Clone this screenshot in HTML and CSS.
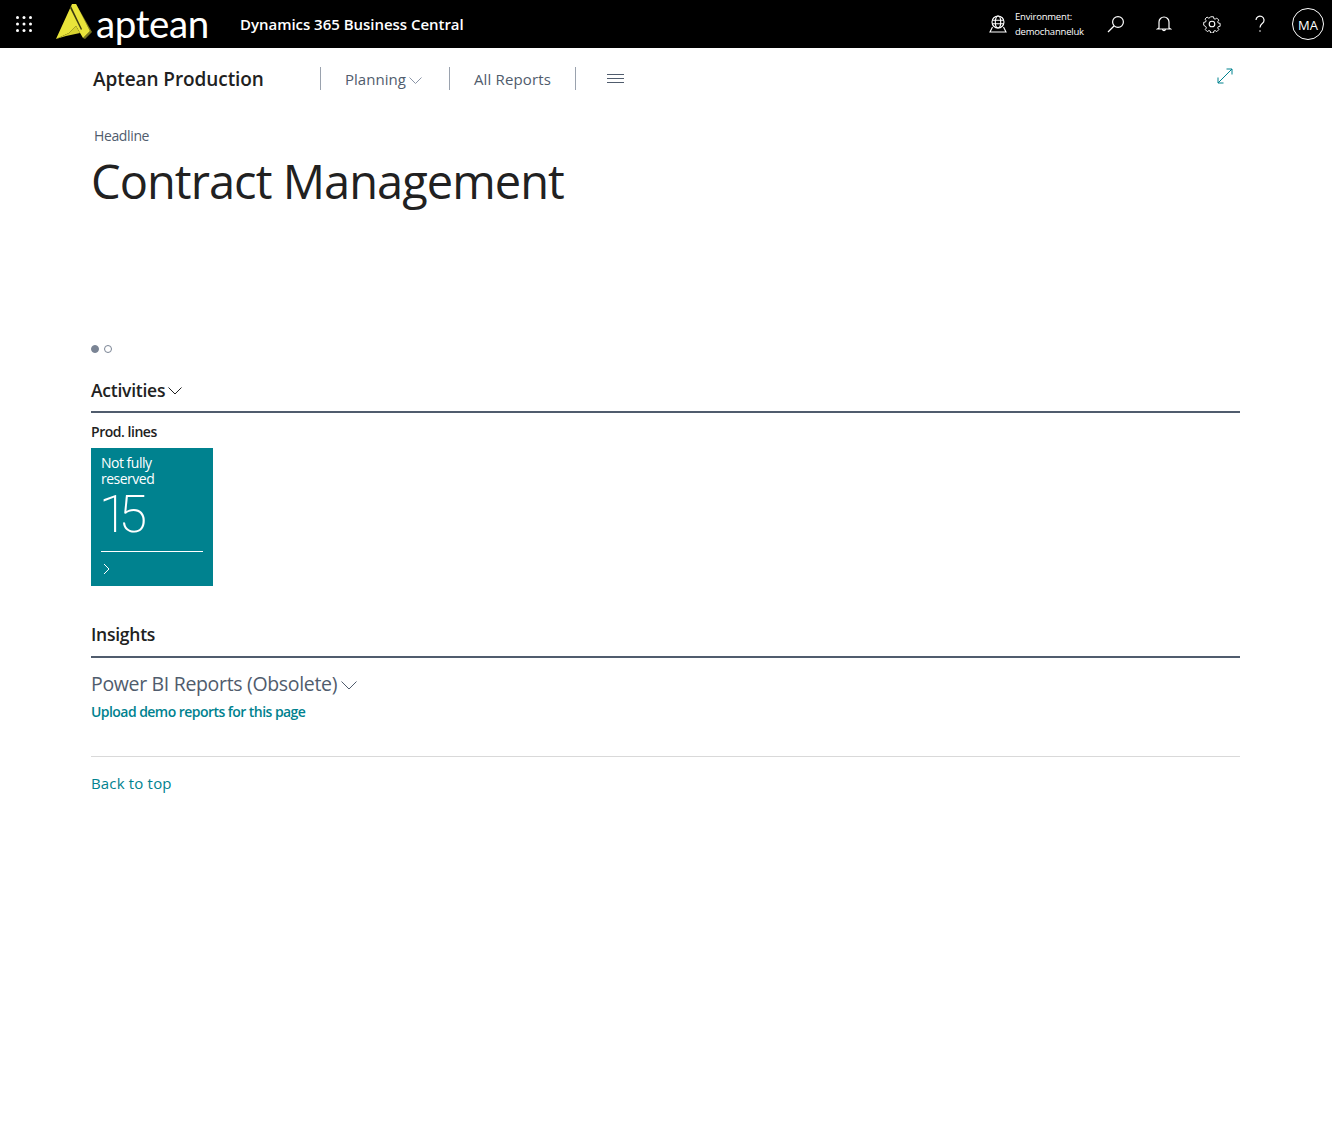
FILE: index.html
```html
<!DOCTYPE html>
<html lang="en">
<head>
<meta charset="utf-8">
<title>Dynamics 365 Business Central</title>
<link rel="stylesheet" href="styles.css">
</head>
<body>
<header class="topbar">
  <svg class="waffle" width="16" height="16" viewBox="0 0 16 16" fill="#fff"><circle cx="1.5" cy="1.5" r="1.5"/><circle cx="8" cy="1.5" r="1.5"/><circle cx="14.5" cy="1.5" r="1.5"/><circle cx="1.5" cy="8" r="1.5"/><circle cx="8" cy="8" r="1.5"/><circle cx="14.5" cy="8" r="1.5"/><circle cx="1.5" cy="14.5" r="1.5"/><circle cx="8" cy="14.5" r="1.5"/><circle cx="14.5" cy="14.5" r="1.5"/></svg>
  <svg class="logomark" width="37" height="37" viewBox="0 0 37 37"><path d="M20 1 L36 29 L29 36 L27 35 L34 28 L19 2 Z" fill="#77751f"/><path d="M0 36 L16 1 L20 1 L34 28 L27 35 L20 23 L13 30 Z" fill="#e9e43a"/><path d="M0 36 L13 30 L20 23 L24 30 L10 33 Z" fill="#d8d32f"/><path d="M15 3 L26 26 L25 27 L14 5 Z" fill="#3a3a10"/></svg>
  <span class="wordmark">aptean</span>
  <span class="product">Dynamics 365 Business Central</span>
  <div class="env">
    <svg width="18" height="18" viewBox="0 0 18 18" fill="none" stroke="#fff" stroke-width="1.1"><circle cx="9" cy="7" r="6"/><ellipse cx="9" cy="7" rx="2.700" ry="6"/><path d="M3.200 5.200h11.600M3.200 8.800h11.600M3.500 12 1 17h16l-2.500-5"/></svg>
    <div class="env-text"><span>Environment:</span><span>demochanneluk</span></div>
  </div>
  <button class="tool"><svg width="18" height="18" viewBox="0 0 18 18" fill="none" stroke="#fff" stroke-width="1.2"><circle cx="11" cy="7" r="5.400"/><path d="M7 11 1 17"/></svg></button>
  <button class="tool"><svg width="16" height="18" viewBox="0 0 16 18" fill="none" stroke="#fff" stroke-width="1.2"><path d="M3 13V7a5 5 0 0 1 10 0v6l1.500 1h-13ZM6.500 14.500a1.600 1.600 0 0 0 3 0"/></svg></button>
  <button class="tool"><svg width="18" height="18" viewBox="0 0 18 18" fill="none" stroke="#fff" stroke-width="1.1"><circle cx="9" cy="9" r="2.800"/><path d="M7.300 1h3.400l.4 2.200 1.500.6 1.900-1.300 2.400 2.400-1.300 1.900.6 1.500 2.200.4v3.400l-2.200.4-.6 1.500 1.300 1.900-2.400 2.400-1.900-1.300-1.500.6-.4 2.200H7.300l-.4-2.200-1.500-.6-1.900 1.300-2.400-2.400 1.300-1.900-.6-1.500L-.7 10.900V7.500l2.200-.4.6-1.500L.8 3.700l2.400-2.400 1.900 1.300 1.500-.6Z" transform="translate(1.300 .9) scale(.86)"/></svg></button>
  <button class="tool"><svg width="12" height="18" viewBox="0 0 12 18" fill="none" stroke="#fff" stroke-width="1.2"><path d="M2 5a4 4 0 1 1 6.500 3.200C7 9.400 6 10 6 12.500"/><circle cx="6" cy="16" r=".8" fill="#fff" stroke="none"/></svg></button>
  <div class="avatar">MA</div>
</header>

<main class="page">
  <nav class="pagenav">
    <h1 class="company">Aptean Production</h1>
    <div class="navitems">
      <a class="navitem first">Planning<svg class="chev-sm" width="13" height="7" viewBox="0 0 13 7" fill="none" stroke="#8a94a6"><path d="M.5.500 6.500 6.500 12.500.5"/></svg></a>
      <a class="navitem">All Reports</a>
      <span class="navmenu"><svg width="17" height="9" viewBox="0 0 17 9" stroke="#505c6d"><path d="M0 .5h17M0 4.500h17M0 8.500h17"/></svg></span>
    </div>
    <svg class="expand" width="16" height="16" viewBox="0 0 16 16" fill="none" stroke="#00828f" stroke-width="1"><path d="M1 15 15 1M9.500 1H15v5.500M1 9.500V15h5.500"/></svg>
  </nav>

  <section class="headline">
    <div class="headline-label">Headline</div>
    <div class="headline-text">Contract Management</div>
    <div class="dots"><span class="dot on"></span><span class="dot"></span></div>
  </section>

  <section class="activities">
    <h2 class="section-title">Activities<svg width="14" height="8" viewBox="0 0 14 8" fill="none" stroke="#212121"><path d="M.5.500 7 7l6.500-6.500"/></svg></h2>
    <h3 class="group-title">Prod. lines</h3>
    <a class="cue">
      <span class="cue-label">Not fully reserved</span>
      <span class="cue-value">15</span>
      <span class="cue-foot"><svg width="7" height="12" viewBox="0 0 7 12" fill="none" stroke="#fff"><path d="M1 1l5 5-5 5"/></svg></span>
    </a>
  </section>

  <section class="insights">
    <h2 class="section-title tall">Insights</h2>
    <h3 class="pbi-title">Power BI Reports (Obsolete)<svg width="16" height="9" viewBox="0 0 16 9" fill="none" stroke="#505c6d"><path d="M.5.500 8 8l7.500-7.500"/></svg></h3>
    <a class="upload">Upload demo reports for this page</a>
  </section>

  <footer class="pagefoot"><a class="backtop">Back to top</a></footer>
</main>
</body>
</html>
```
FILE: styles.css
```css
* { box-sizing: border-box; }
html, body { margin: 0; padding: 0; }
body { font-family: "Open Sans", "Noto Sans", sans-serif; background: #fff; color: #212121; height: 1128px; overflow: hidden; }
h1, h2, h3 { margin: 0; }
button { background: none; border: 0; padding: 0; }

.topbar { height: 48px; background: #000; color: #fff; display: flex; align-items: center; }
.waffle { margin-left: 16px; flex: none; }
.logomark { margin-left: 24px; flex: none; margin-top: -6px; }
.wordmark { font-family: "Lato", sans-serif; font-size: 38.500px; line-height: 48px; margin-left: 3px; letter-spacing: -.4px; width: 112px; margin-top: -3px; }
.product { font-size: 15px; font-weight: 600; margin-left: 32px; letter-spacing: -.03px; white-space: nowrap; }
.env { margin-left: auto; display: flex; align-items: center; gap: 8px; }
.env-text { display: flex; flex-direction: column; font-size: 9.500px; line-height: 15px; letter-spacing: -.2px; width: 77px; white-space: nowrap; }
.tool { width: 48px; height: 48px; display: flex; align-items: center; justify-content: center; flex: none; }
.avatar { width: 32px; height: 32px; margin: 0 8px; border: 1px solid #fff; border-radius: 50%; display: flex; align-items: center; justify-content: center; font-size: 13px; padding-top: 1px; flex: none; }

.page { padding: 0 92px 0 91px; }
.pagenav { height: 62px; display: flex; align-items: center; position: relative; }
.company { font-size: 19px; line-height: 24px; font-weight: 600; margin-left: 2px; width: 227px; letter-spacing: -.08px; white-space: nowrap; }
.navitems { display: flex; align-items: center; margin-top: -1px; }
.navitem { height: 23px; border-left: 1px solid #9aa2ae; display: flex; align-items: center; gap: 3px; padding: 0 24px; font-size: 15px; color: #505c6d; letter-spacing: .15px; white-space: nowrap; }
.navitem.first { padding-right: 27px; letter-spacing: .03px; }
.navmenu { height: 23px; border-left: 1px solid #9aa2ae; padding: 0 0 0 31px; display: flex; align-items: center; }
.chev-sm { margin-top: 3px; }
.expand { position: absolute; right: 7px; top: 20px; }

.headline { height: 268px; padding-top: 16px; }
.headline-label { font-size: 14px; line-height: 20px; color: #505c6d; margin-left: 3px; letter-spacing: -.37px; }
.headline-text { font-size: 47px; line-height: 60px; letter-spacing: -.95px; margin-top: 5px; font-weight: 400; color: #212121; white-space: nowrap; }
.dots { display: flex; gap: 5px; margin-top: 134px; }
.dot { width: 8px; height: 8px; border-radius: 50%; border: 1px solid #7a8494; }
.dot.on { background: #7a8494; }

.section-title { font-size: 17.500px; line-height: 24px; font-weight: 600; height: 35px; border-bottom: 2px solid #505c6d; display: flex; gap: 3px; align-items: flex-start; letter-spacing: -.25px; }
.section-title.tall { height: 36px; }
.section-title svg { margin-top: 9px; }
.group-title { font-size: 14px; line-height: 20px; font-weight: 600; margin-top: 9px; letter-spacing: -.47px; }
.cue { display: block; width: 122px; height: 138px; margin-top: 6px; background: #00828f; color: #fff; padding: 7px 10px 0; }
.cue-label { display: block; font-size: 14px; line-height: 16px; width: 90px; letter-spacing: -.5px; }
.cue-value { display: block; font-family: "Roboto", sans-serif; font-size: 52px; line-height: 50px; font-weight: 200; letter-spacing: -9px; margin: 3px 0 0 -2px; width: 104px; height: 61px; }
.cue-foot { display: block; width: 102px; border-top: 1px solid #fff; padding: 11px 0 0 2px; line-height: 0; }

.insights { margin-top: 36px; }
.pbi-title { font-size: 19.500px; line-height: 26px; font-weight: 400; color: #505c6d; margin-top: 13px; display: flex; align-items: center; gap: 4px; letter-spacing: -.33px; white-space: nowrap; }
.pbi-title svg { margin-top: 3px; }
.upload { display: block; font-size: 14px; line-height: 20px; font-weight: 600; color: #00828f; margin-top: 5px; letter-spacing: -.55px; }
.pagefoot { margin-top: 34px; border-top: 1px solid #d9d9d9; padding-top: 15px; }
.backtop { font-size: 15px; line-height: 22px; color: #00828f; letter-spacing: .17px; display: block; }
```
